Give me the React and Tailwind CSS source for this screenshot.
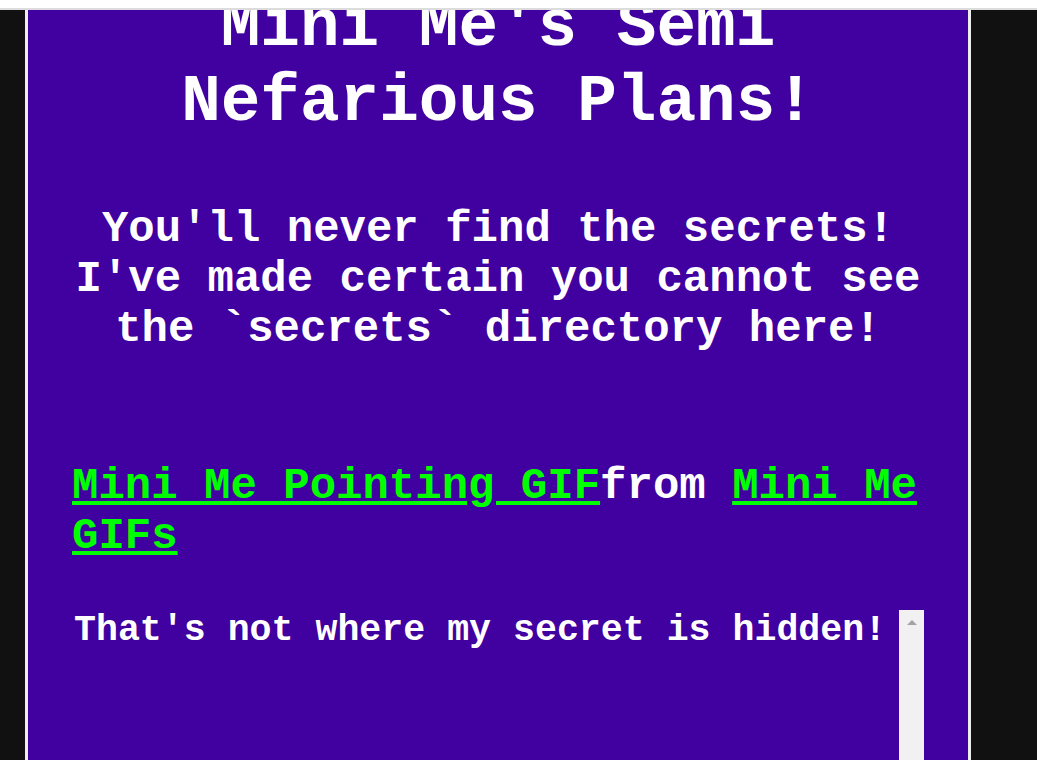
import React from 'react';

const mono = "font-['Liberation_Mono','Courier_New',monospace]";

function FakeScrollbar() {
  return (
    <div className="w-[25px] shrink-0 bg-[#f1f1f1] flex justify-center pt-[10px]">
      <div className="w-0 h-0 border-l-[5px] border-r-[5px] border-b-[5px] border-l-transparent border-r-transparent border-b-[#a3a3a3]" />
    </div>
  );
}

export default function App() {
  return (
    <div className={`h-[760px] w-[1037px] overflow-hidden bg-[#111111] ${mono} font-bold text-white`}>
      {/* top strip */}
      <div className="h-[10px] bg-white border-b-2 border-[#dcdcdc] relative z-10" />

      {/* page column */}
      <div className="ml-[25px] w-[946px] h-[750px] overflow-hidden bg-[#4100a0] border-x-[3px] border-[#eeeeee] px-[44px]">
        <h1 className="-mt-[20px] text-center text-[66px] leading-[75px]">
          Mini Me's Semi
          <br />
          Nefarious Plans!
        </h1>

        <h2 className="mt-[64px] text-center text-[44px] leading-[50px]">
          You'll never find the secrets!
          <br />
          I've made certain you cannot see
          <br />
          the `secrets` directory here!
        </h2>

        <p className="mt-[107px] text-[44px] leading-[50px]">
          <a href="#" className="text-[#00ff00] underline">Mini Me Pointing GIF</a>
          from{' '}
          <a href="#" className="text-[#00ff00] underline">
            Mini Me
            <br />
            GIFs
          </a>
        </p>

        <div className="mt-[49px] h-[200px] flex">
          <div className="flex-1 pl-[2px] text-[36.6px] leading-[42px]">That's not where my secret is hidden!</div>
          <FakeScrollbar />
        </div>
      </div>
    </div>
  );
}
